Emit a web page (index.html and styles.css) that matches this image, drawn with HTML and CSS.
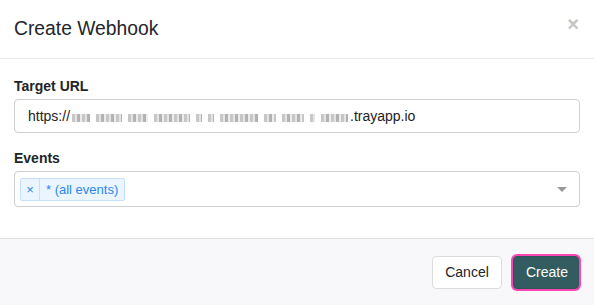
FILE: index.html
```html
<!DOCTYPE html>
<html>
<head>
<meta charset="utf-8">
<link rel="stylesheet" href="styles.css">
</head>
<body>
<div class="modal">
  <div class="modal-header">
    <h4 class="modal-title">Create Webhook</h4>
    <span class="close">×</span>
  </div>
  <div class="modal-body">
    <div class="form-group">
      <label class="label">Target URL</label>
      <div class="input">https://<span class="blur"><i style="width:18px"></i><i style="width:26px"></i><i style="width:20px"></i><i style="width:36px"></i><i style="width:6px"></i><i style="width:6px"></i><i style="width:38px"></i><i style="width:12px"></i><i style="width:22px"></i><i style="width:5px"></i><i style="width:27px"></i></span>.trayapp.io</div>
    </div>
    <div class="form-group last">
      <label class="label">Events</label>
      <div class="select">
        <div class="tag">
          <span class="tag-x">×</span>
          <span class="tag-label">* (all events)</span>
        </div>
        <span class="arrow"></span>
      </div>
    </div>
  </div>
  <div class="modal-footer">
    <button class="btn btn-default">Cancel</button>
    <button class="btn btn-primary">Create</button>
  </div>
</div>
</body>
</html>
```

FILE: styles.css
```css
* { box-sizing: border-box; }
html, body { margin: 0; padding: 0; background: #fff; }
body {
  font-family: "Liberation Sans", Arial, sans-serif;
  color: #212529;
  width: 594px;
  height: 305px;
  overflow: hidden;
}
.modal { display: flex; flex-direction: column; height: 305px; }
.modal-header {
  height: 59px;
  border-bottom: 1px solid #e6e6e6;
  display: flex;
  align-items: center;
  justify-content: space-between;
  padding: 0 15px 0 14px;
}
.modal-title {
  margin: 0;
  font-size: 19.3px;
  font-weight: 400;
  color: #22252b;
}
.close {
  font-size: 20px;
  font-weight: 700;
  color: #c4c4c4;
  margin-top: -10px;
  line-height: 1;
}
.modal-body { padding: 17px 14px 0 14px; height: 179px; }
.form-group { display: flex; flex-direction: column; margin-bottom: 15px; }
.label {
  font-size: 14px;
  font-weight: 700;
  line-height: 20px;
  margin-bottom: 3px;
  color: #212529;
}
.input {
  height: 34px;
  border: 1px solid #cfcfcf;
  border-radius: 4px;
  padding: 0 13px;
  font-size: 14px;
  display: flex;
  align-items: center;
  color: #222;
  white-space: nowrap;
}
.blur {
  display: flex;
  gap: 6px;
  height: 8px;
  margin: 3px 2px 0 2px;
}
.blur i {
  display: block;
  height: 8px;
  background: repeating-linear-gradient(90deg, #b9b9b9 0 3px, #dedede 3px 5px, #9f9f9f 5px 8px, #e8e8e8 8px 10px);
  opacity: 0.8;
}
.select {
  height: 36px;
  border: 1px solid #cfcfcf;
  border-radius: 4px;
  display: flex;
  align-items: center;
  padding: 0 12px 0 5px;
  justify-content: space-between;
}
.tag {
  display: flex;
  height: 23px;
  background: #ebf5ff;
  border: 1px solid #c6e0fb;
  border-radius: 2px;
  color: #2b86f0;
  font-size: 13px;
  align-items: stretch;
}
.tag-x {
  width: 19px;
  display: flex;
  align-items: center;
  justify-content: center;
  border-right: 1px solid #c6e0fb;
  font-size: 13px;
}
.tag-label { padding: 0 6px 0 6px; display: flex; align-items: center; }
.arrow {
  width: 0; height: 0;
  border-left: 5px solid transparent;
  border-right: 5px solid transparent;
  border-top: 5px solid #999;
  margin-top: 1px;
}
.modal-footer {
  flex: 1;
  background: #f8f8fa;
  border-top: 1px solid #e1e1e4;
  display: flex;
  justify-content: flex-end;
  align-items: center;
  padding: 0 15px 0 0;
  gap: 11px;
}
.btn {
  font-family: inherit;
  font-size: 14px;
  height: 33px;
  border-radius: 4px;
  padding: 0 12px;
  margin: 0;
  cursor: pointer;
}
.btn-default {
  background: #fff;
  border: 1px solid #dcdcdc;
  color: #212529;
  width: 70px;
}
.btn-primary {
  background: #335c60;
  border: 1px solid #2e5558;
  color: #fff;
  width: 66px;
  box-shadow: 0 0 0 2px #fb47b6;
}
```
